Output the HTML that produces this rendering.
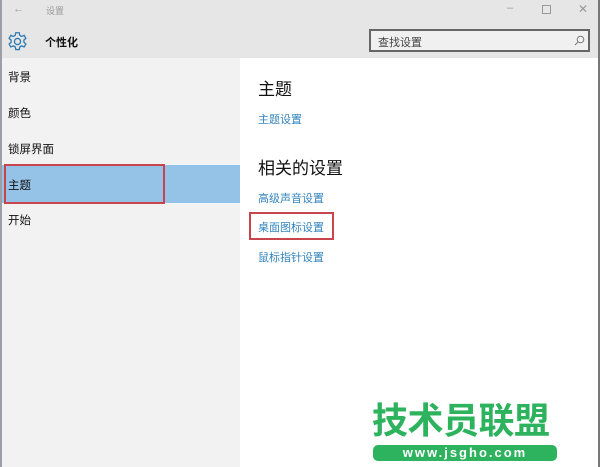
<!DOCTYPE html>
<html><head><meta charset="utf-8"><style>
*{margin:0;padding:0;box-sizing:border-box}
body{width:600px;height:467px;position:relative;overflow:hidden;background:#fff;font-family:"Liberation Sans","Noto Sans CJK SC",sans-serif}
.a{position:absolute;white-space:nowrap}
.lnk{color:#3384bd;font-size:11px}
.nav{font-size:11.5px;color:#111;left:8px}
</style></head><body>
<div class="a" style="left:0;top:0;width:600px;height:58px;background:#e6e6e6"></div>
<div class="a" style="left:0;top:58px;width:240px;height:409px;background:#f2f2f2"></div>
<div class="a" style="left:0;top:0;width:2px;height:467px;background:#9aa0a6"></div>
<div class="a" style="left:598px;top:0;width:2px;height:467px;background:#777"></div>
<div class="a" style="left:13px;top:3px;font-size:11px;color:#999">←</div>
<div class="a" style="left:46px;top:4px;font-size:9px;color:#999">设置</div>
<div class="a" style="left:507px;top:2px;font-size:11px;color:#999">–</div>
<div class="a" style="left:542px;top:5px;width:9px;height:9px;border:1px solid #999"></div>
<div class="a" style="left:578px;top:2px;font-size:12px;color:#999">✕</div>
<svg class="a" style="left:7px;top:31px" width="21" height="21" viewBox="0 0 24 24" fill="none" stroke="#2a7bb5" stroke-width="1.5"><circle cx="12" cy="12" r="3.5"/><path d="M10 2h4l.6 3 2.2 1.2 2.8-1.2 2 3.4-2.3 2v2.4l2.3 2-2 3.4-2.8-1.2-2.2 1.2-.6 3h-4l-.6-3-2.2-1.2-2.8 1.2-2-3.4 2.3-2v-2.4l-2.3-2 2-3.4 2.8 1.2L9.4 5z"/></svg>
<div class="a" style="left:45px;top:34px;font-size:11px;font-weight:bold;color:#111">个性化</div>
<div class="a" style="left:369px;top:29px;width:221px;height:23px;border:2px solid #666;background:#f0f0f0"></div>
<div class="a" style="left:378px;top:34px;font-size:11px;color:#444">查找设置</div>
<svg class="a" style="left:574px;top:35px" width="11" height="11" viewBox="0 0 11 11" fill="none" stroke="#777" stroke-width="1"><circle cx="6.5" cy="4.5" r="3.3"/><path d="M4.2 6.8L1 10"/></svg>
<div class="a nav" style="top:69px">背景</div>
<div class="a nav" style="top:105px">颜色</div>
<div class="a nav" style="top:141px">锁屏界面</div>
<div class="a" style="left:2px;top:165px;width:238px;height:38px;background:#95c2e7"></div>
<div class="a" style="left:4px;top:164px;width:161px;height:40px;border:2px solid #c8454b"></div>
<div class="a nav" style="top:177px">主题</div>
<div class="a nav" style="top:212px">开始</div>
<div class="a" style="left:258px;top:75px;font-size:17px;color:#111">主题</div>
<div class="a lnk" style="left:258px;top:111px">主题设置</div>
<div class="a" style="left:258px;top:154px;font-size:17px;color:#111">相关的设置</div>
<div class="a lnk" style="left:258px;top:190px">高级声音设置</div>
<div class="a" style="left:249px;top:212px;width:85px;height:28px;border:2px solid #c8454b"></div>
<div class="a lnk" style="left:258px;top:219px">桌面图标设置</div>
<div class="a lnk" style="left:258px;top:249px">鼠标指针设置</div>
<div class="a" style="left:372px;top:400px;font-size:36px;font-weight:bold;color:#2db35d;letter-spacing:-0.5px;line-height:42px">技术员联盟</div>
<div class="a" style="left:373px;top:445px;width:184px;height:16px;border-radius:5px;background:#2db35d;color:#fff;font-size:13px;font-weight:bold;text-align:center;line-height:16px;letter-spacing:2px">www.jsgho.com</div>
</body></html>
